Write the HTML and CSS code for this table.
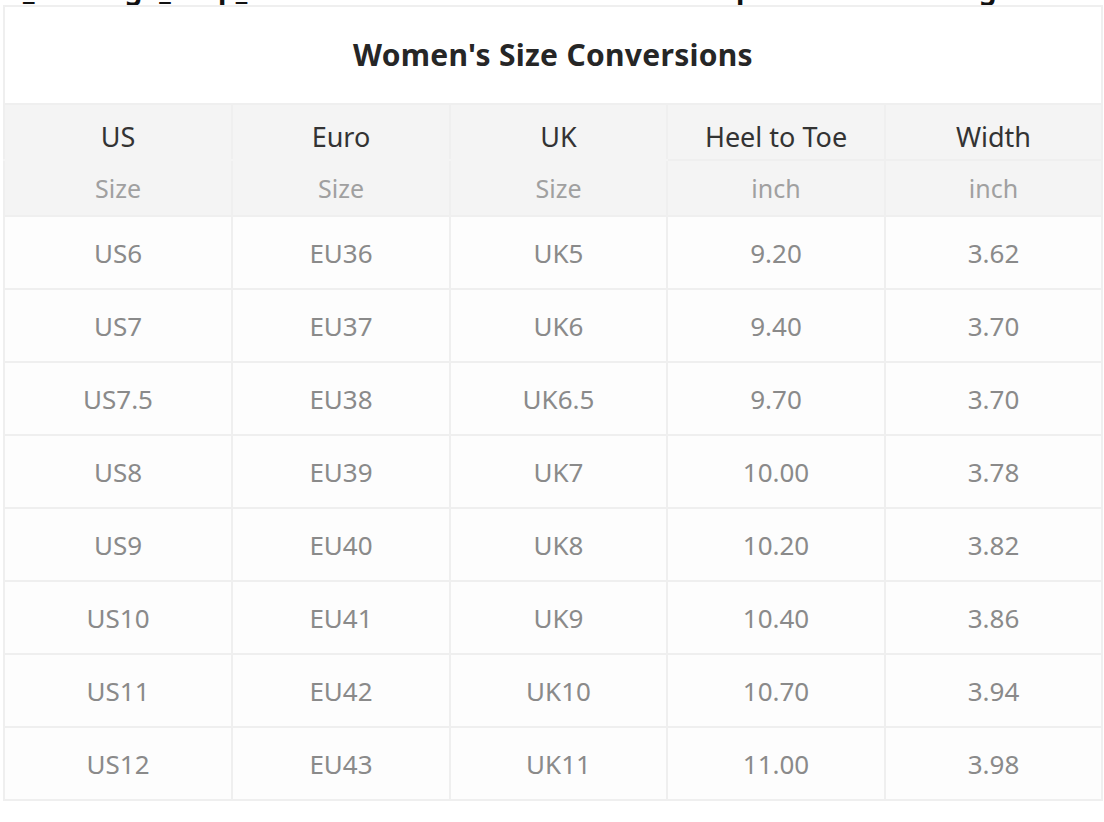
FILE: index.html
```html
<!DOCTYPE html>
<html lang="en">
<head>
<meta charset="utf-8">
<title>Women's Size Conversions</title>
<link rel="stylesheet" href="styles.css">
</head>
<body>
<div class="page">
  <div class="cut-title">_ Image_Crop_ WOMEN'S SIZE CHART Sample TITLE Image ON Shop SIZE (WOMEN)</div>
  <table class="chart">
    <colgroup>
      <col class="c1"><col class="c2"><col class="c3"><col class="c4"><col class="c5">
    </colgroup>
    <thead>
      <tr><th colspan="5" class="title">Women's Size Conversions</th></tr>
      <tr class="h1">
        <th class="open">US</th><th class="open">Euro</th><th class="open">UK</th><th>Heel to Toe</th><th>Width</th>
      </tr>
      <tr class="h2">
        <th class="closed">Size</th><th class="closed">Size</th><th class="closed">Size</th><th>inch</th><th>inch</th>
      </tr>
    </thead>
    <tbody>
      <tr><td>US6</td><td>EU36</td><td>UK5</td><td>9.20</td><td>3.62</td></tr>
      <tr><td>US7</td><td>EU37</td><td>UK6</td><td>9.40</td><td>3.70</td></tr>
      <tr><td>US7.5</td><td>EU38</td><td>UK6.5</td><td>9.70</td><td>3.70</td></tr>
      <tr><td>US8</td><td>EU39</td><td>UK7</td><td>10.00</td><td>3.78</td></tr>
      <tr><td>US9</td><td>EU40</td><td>UK8</td><td>10.20</td><td>3.82</td></tr>
      <tr><td>US10</td><td>EU41</td><td>UK9</td><td>10.40</td><td>3.86</td></tr>
      <tr><td>US11</td><td>EU42</td><td>UK10</td><td>10.70</td><td>3.94</td></tr>
      <tr><td>US12</td><td>EU43</td><td>UK11</td><td>11.00</td><td>3.98</td></tr>
    </tbody>
  </table>
</div>
</body>
</html>
```

FILE: styles.css
```css
html, body {
  margin: 0;
  padding: 0;
  background: #ffffff;
}

body {
  font-family: "Noto Sans", "Open Sans", "DejaVu Sans", sans-serif;
  overflow: hidden;
}

.page {
  padding: 0 3px;
}

.cut-title {
  font-weight: 700;
  font-size: 28px;
  line-height: 34px;
  height: 34px;
  margin-top: -29px;
  white-space: nowrap;
  overflow: hidden;
  word-spacing: 28px;
  color: #111;
  padding-left: 20px;
}

.chart {
  width: 1098px;
  border-collapse: collapse;
  table-layout: fixed;
  border: 2px solid #ececec;
}

.c1 { width: 228px; }
.c2 { width: 218px; }
.c3 { width: 217px; }
.c4 { width: 218px; }
.c5 { width: 217px; }

.chart th,
.chart td {
  border: 2px solid #efefef;
  text-align: center;
  padding: 0;
}

.chart th.title {
  height: 94px;
  background: #ffffff;
  color: #262626;
  font-size: 30px;
  font-weight: 700;
  letter-spacing: 0.3px;
  padding-bottom: 2px;
}

.h1 th,
.h2 th {
  background: #f4f4f4;
  font-weight: 400;
}

.h1 th {
  height: 46px;
  font-size: 27px;
  color: #333333;
  padding-top: 8px;
}

.h2 th {
  height: 54px;
  font-size: 25px;
  color: #a0a0a0;
}

.h1 th.open {
  border-bottom-color: #f4f4f4;
}

.h2 th.closed {
  border-top-color: #f4f4f4;
}

.chart td {
  height: 71px;
  font-size: 26px;
  color: #8a8a8a;
  background: #fdfdfd;
}
```
